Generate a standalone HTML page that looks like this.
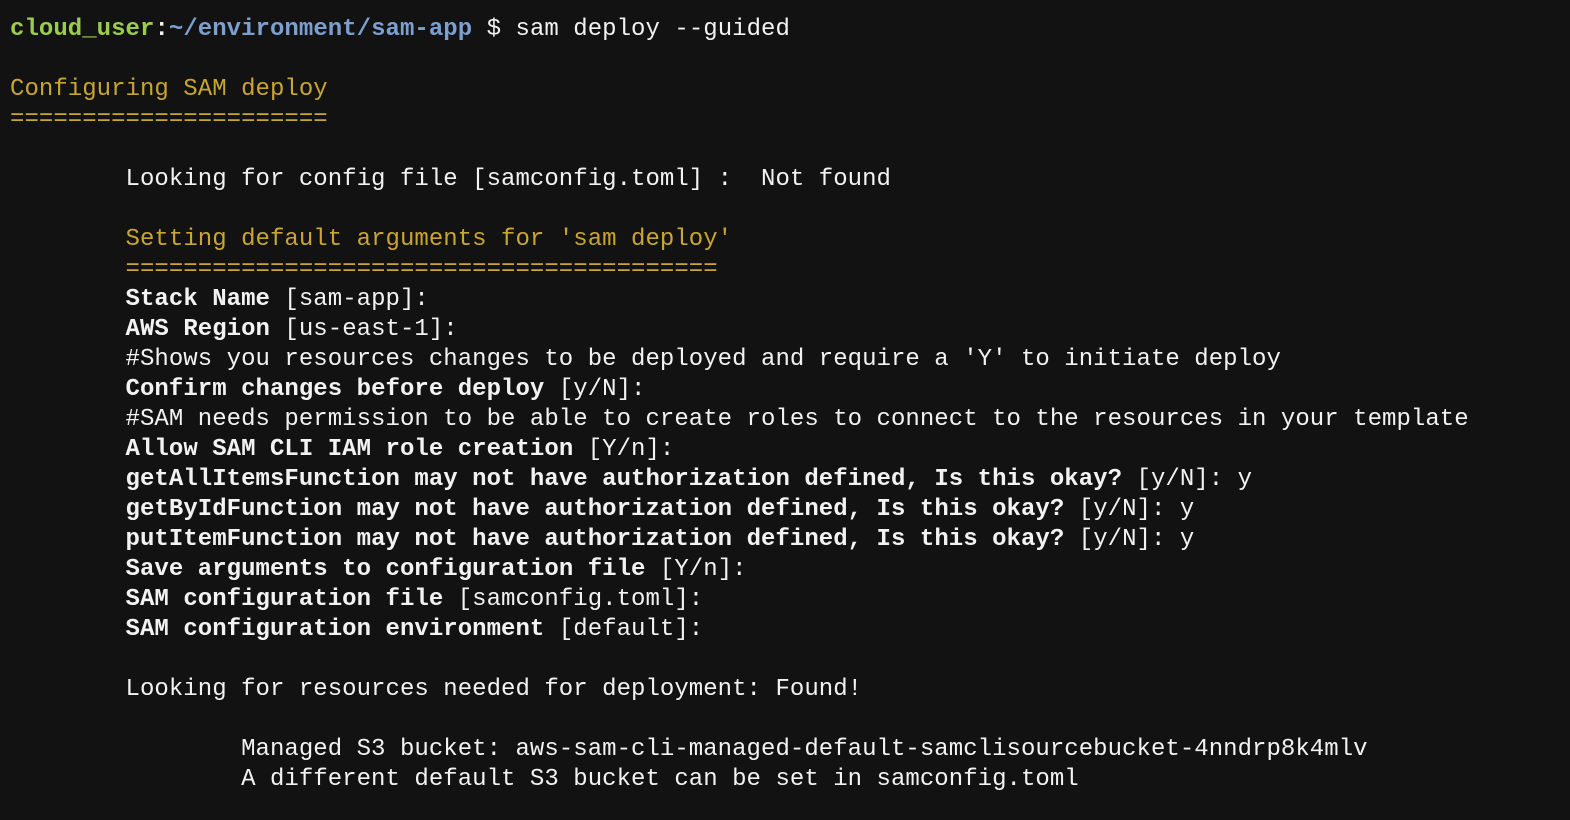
<!DOCTYPE html>
<html><head><meta charset="utf-8"><style>
html,body{margin:0;padding:0;background:#121212;}
body{width:1570px;height:820px;overflow:hidden;}
pre{margin:0;padding:15px 0 0 10px;font-family:"Liberation Mono",monospace;font-size:24px;line-height:30px;letter-spacing:0.04px;color:#f2f2f2;white-space:pre;}
.g{color:#9ccc4e;font-weight:bold}.bl{color:#7c9fd0;font-weight:bold}.y{color:#c9a632}b{font-weight:bold}
</style></head><body><pre><span class="g">cloud_user</span><b>:</b><span class="bl">~/environment/sam-app</span> $ sam deploy --guided

<span class="y">Configuring SAM deploy
======================</span>

        Looking for config file [samconfig.toml] :  Not found

        <span class="y">Setting default arguments for 'sam deploy'
        =========================================</span>
        <b>Stack Name</b> [sam-app]:
        <b>AWS Region</b> [us-east-1]:
        #Shows you resources changes to be deployed and require a 'Y' to initiate deploy
        <b>Confirm changes before deploy</b> [y/N]:
        #SAM needs permission to be able to create roles to connect to the resources in your template
        <b>Allow SAM CLI IAM role creation</b> [Y/n]:
        <b>getAllItemsFunction may not have authorization defined, Is this okay?</b> [y/N]: y
        <b>getByIdFunction may not have authorization defined, Is this okay?</b> [y/N]: y
        <b>putItemFunction may not have authorization defined, Is this okay?</b> [y/N]: y
        <b>Save arguments to configuration file</b> [Y/n]:
        <b>SAM configuration file</b> [samconfig.toml]:
        <b>SAM configuration environment</b> [default]:

        Looking for resources needed for deployment: Found!

                Managed S3 bucket: aws-sam-cli-managed-default-samclisourcebucket-4nndrp8k4mlv
                A different default S3 bucket can be set in samconfig.toml
</pre></body></html>
